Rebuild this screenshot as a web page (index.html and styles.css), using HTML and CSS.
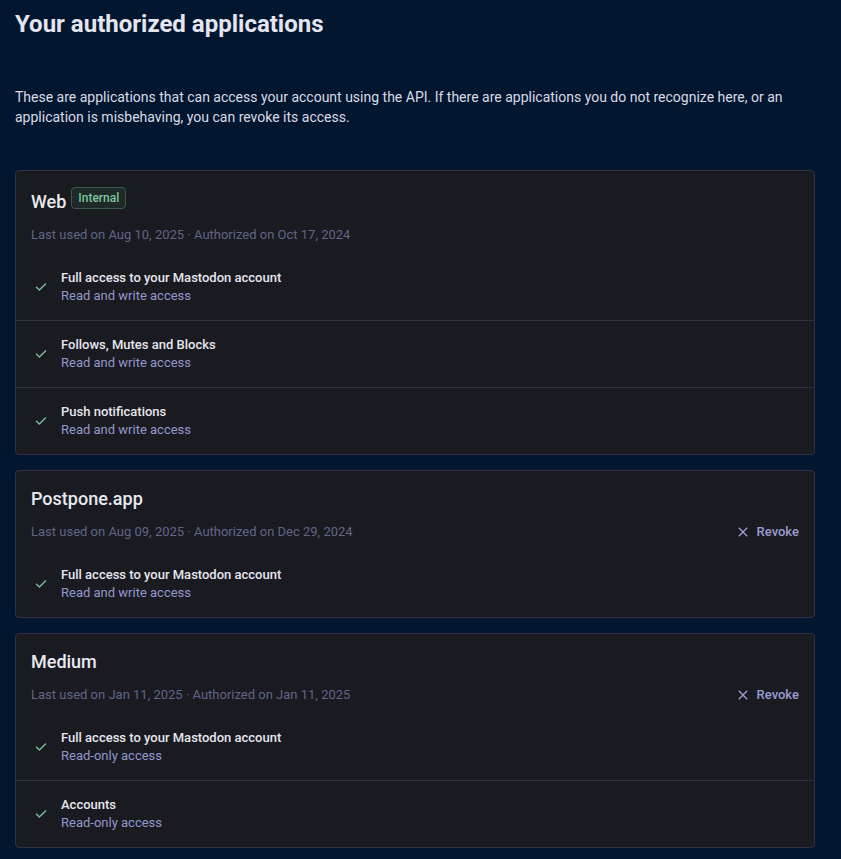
FILE: index.html
```html
<!DOCTYPE html>
<html lang="en">
<head>
<meta charset="utf-8">
<title>Your authorized applications</title>
<link rel="stylesheet" href="styles.css">
</head>
<body>
<main class="page">
  <h1 class="page-title">Your authorized applications</h1>
  <p class="intro">These are applications that can access your account using the API. If there are applications you do not recognize here, or an application is misbehaving, you can revoke its access.</p>

  <section class="app-list">
    <article class="app-card">
      <header class="app-header">
        <div class="title-row">
          <h2 class="app-name">Web</h2>
          <span class="badge">Internal</span>
        </div>
        <div class="meta-row">
          <span class="meta">Last used on Aug 10, 2025 · Authorized on Oct 17, 2024</span>
        </div>
      </header>
      <ul class="perms">
        <li class="perm">
          <span class="perm-icon"><svg viewBox="0 -960 960 960" width="16" height="16"><path d="M382-240 154-468l57-57 171 171 367-367 57 57-424 424Z"/></svg></span>
          <div class="perm-text"><strong class="perm-title">Full access to your Mastodon account</strong><span class="perm-sub">Read and write access</span></div>
        </li>
        <li class="perm">
          <span class="perm-icon"><svg viewBox="0 -960 960 960" width="16" height="16"><path d="M382-240 154-468l57-57 171 171 367-367 57 57-424 424Z"/></svg></span>
          <div class="perm-text"><strong class="perm-title">Follows, Mutes and Blocks</strong><span class="perm-sub">Read and write access</span></div>
        </li>
        <li class="perm">
          <span class="perm-icon"><svg viewBox="0 -960 960 960" width="16" height="16"><path d="M382-240 154-468l57-57 171 171 367-367 57 57-424 424Z"/></svg></span>
          <div class="perm-text"><strong class="perm-title">Push notifications</strong><span class="perm-sub">Read and write access</span></div>
        </li>
      </ul>
    </article>

    <article class="app-card">
      <header class="app-header">
        <div class="title-row">
          <h2 class="app-name">Postpone.app</h2>
        </div>
        <div class="meta-row">
          <span class="meta">Last used on Aug 09, 2025 · Authorized on Dec 29, 2024</span>
          <button class="revoke" type="button"><svg viewBox="0 -960 960 960" width="16" height="16"><path d="M256-200l-56-56 224-224-224-224 56-56 224 224 224-224 56 56-224 224 224 224-56 56-224-224-224 224Z"/></svg>Revoke</button>
        </div>
      </header>
      <ul class="perms">
        <li class="perm">
          <span class="perm-icon"><svg viewBox="0 -960 960 960" width="16" height="16"><path d="M382-240 154-468l57-57 171 171 367-367 57 57-424 424Z"/></svg></span>
          <div class="perm-text"><strong class="perm-title">Full access to your Mastodon account</strong><span class="perm-sub">Read and write access</span></div>
        </li>
      </ul>
    </article>

    <article class="app-card">
      <header class="app-header">
        <div class="title-row">
          <h2 class="app-name">Medium</h2>
        </div>
        <div class="meta-row">
          <span class="meta">Last used on Jan 11, 2025 · Authorized on Jan 11, 2025</span>
          <button class="revoke" type="button"><svg viewBox="0 -960 960 960" width="16" height="16"><path d="M256-200l-56-56 224-224-224-224 56-56 224 224 224-224 56 56-224 224 224 224-56 56-224-224-224 224Z"/></svg>Revoke</button>
        </div>
      </header>
      <ul class="perms">
        <li class="perm">
          <span class="perm-icon"><svg viewBox="0 -960 960 960" width="16" height="16"><path d="M382-240 154-468l57-57 171 171 367-367 57 57-424 424Z"/></svg></span>
          <div class="perm-text"><strong class="perm-title">Full access to your Mastodon account</strong><span class="perm-sub">Read-only access</span></div>
        </li>
        <li class="perm">
          <span class="perm-icon"><svg viewBox="0 -960 960 960" width="16" height="16"><path d="M382-240 154-468l57-57 171 171 367-367 57 57-424 424Z"/></svg></span>
          <div class="perm-text"><strong class="perm-title">Accounts</strong><span class="perm-sub">Read-only access</span></div>
        </li>
      </ul>
    </article>
  </section>
</main>
</body>
</html>
```

FILE: styles.css
```css
* { box-sizing: border-box; }

html, body {
  margin: 0;
  padding: 0;
  background: #03162f;
}

body {
  font-family: Roboto, "Liberation Sans", sans-serif;
  color: #e6e7ee;
}

.page {
  padding: 10px 26px 20px 15px;
  width: 841px;
}

.page-title {
  margin: 0;
  font-size: 24px;
  line-height: 29px;
  font-weight: 700;
  color: #e3e5f0;
}

.intro {
  margin: 48px 0 0;
  font-size: 14px;
  line-height: 20px;
  color: #d9dbe6;
  width: 800px;
}

.app-list {
  margin-top: 43px;
  display: flex;
  flex-direction: column;
  gap: 15px;
}

.app-card {
  width: 800px;
  background: #1a1a21;
  border: 1px solid #2f3140;
  border-radius: 4px;
}

.app-header {
  padding: 16px 15px 9px;
  display: flex;
  flex-direction: column;
  gap: 11px;
}

.title-row {
  display: flex;
  align-items: flex-end;
  gap: 5px;
}

.app-name {
  margin: 0;
  font-size: 18px;
  line-height: 24px;
  font-weight: 500;
  color: #e9e9f1;
}

.badge {
  margin: 0 0 5px;
  font-size: 12px;
  line-height: 20px;
  font-weight: 500;
  padding: 0 6px;
  color: #7fc3a0;
  background: #1d2a27;
  border: 1px solid #3b5a4b;
  border-radius: 4px;
}

.meta-row {
  display: flex;
  align-items: center;
  justify-content: space-between;
  height: 20px;
}

.meta {
  font-size: 13px;
  line-height: 20px;
  color: #5f6686;
}

.revoke {
  display: flex;
  align-items: center;
  gap: 6px;
  padding: 0;
  border: 0;
  background: none;
  font-family: inherit;
  font-size: 13px;
  font-weight: 500;
  line-height: 20px;
  color: #979dd0;
  cursor: pointer;
}

.revoke svg { fill: #979dd0; display: block; }

.perms {
  list-style: none;
  margin: 0;
  padding: 0;
}

.perm {
  display: flex;
  align-items: center;
  gap: 10px;
  padding: 15px;
}

.perm + .perm {
  border-top: 1px solid #2f3140;
}

.perm-icon {
  width: 20px;
  display: flex;
  justify-content: center;
}

.perm-icon svg { fill: #79bd9a; display: block; }

.perm-text {
  display: flex;
  flex-direction: column;
}

.perm-title {
  font-size: 13px;
  line-height: 18px;
  font-weight: 500;
  color: #e6e7ee;
}

.perm-sub {
  font-size: 13px;
  line-height: 18px;
  color: #9198cb;
}
```
